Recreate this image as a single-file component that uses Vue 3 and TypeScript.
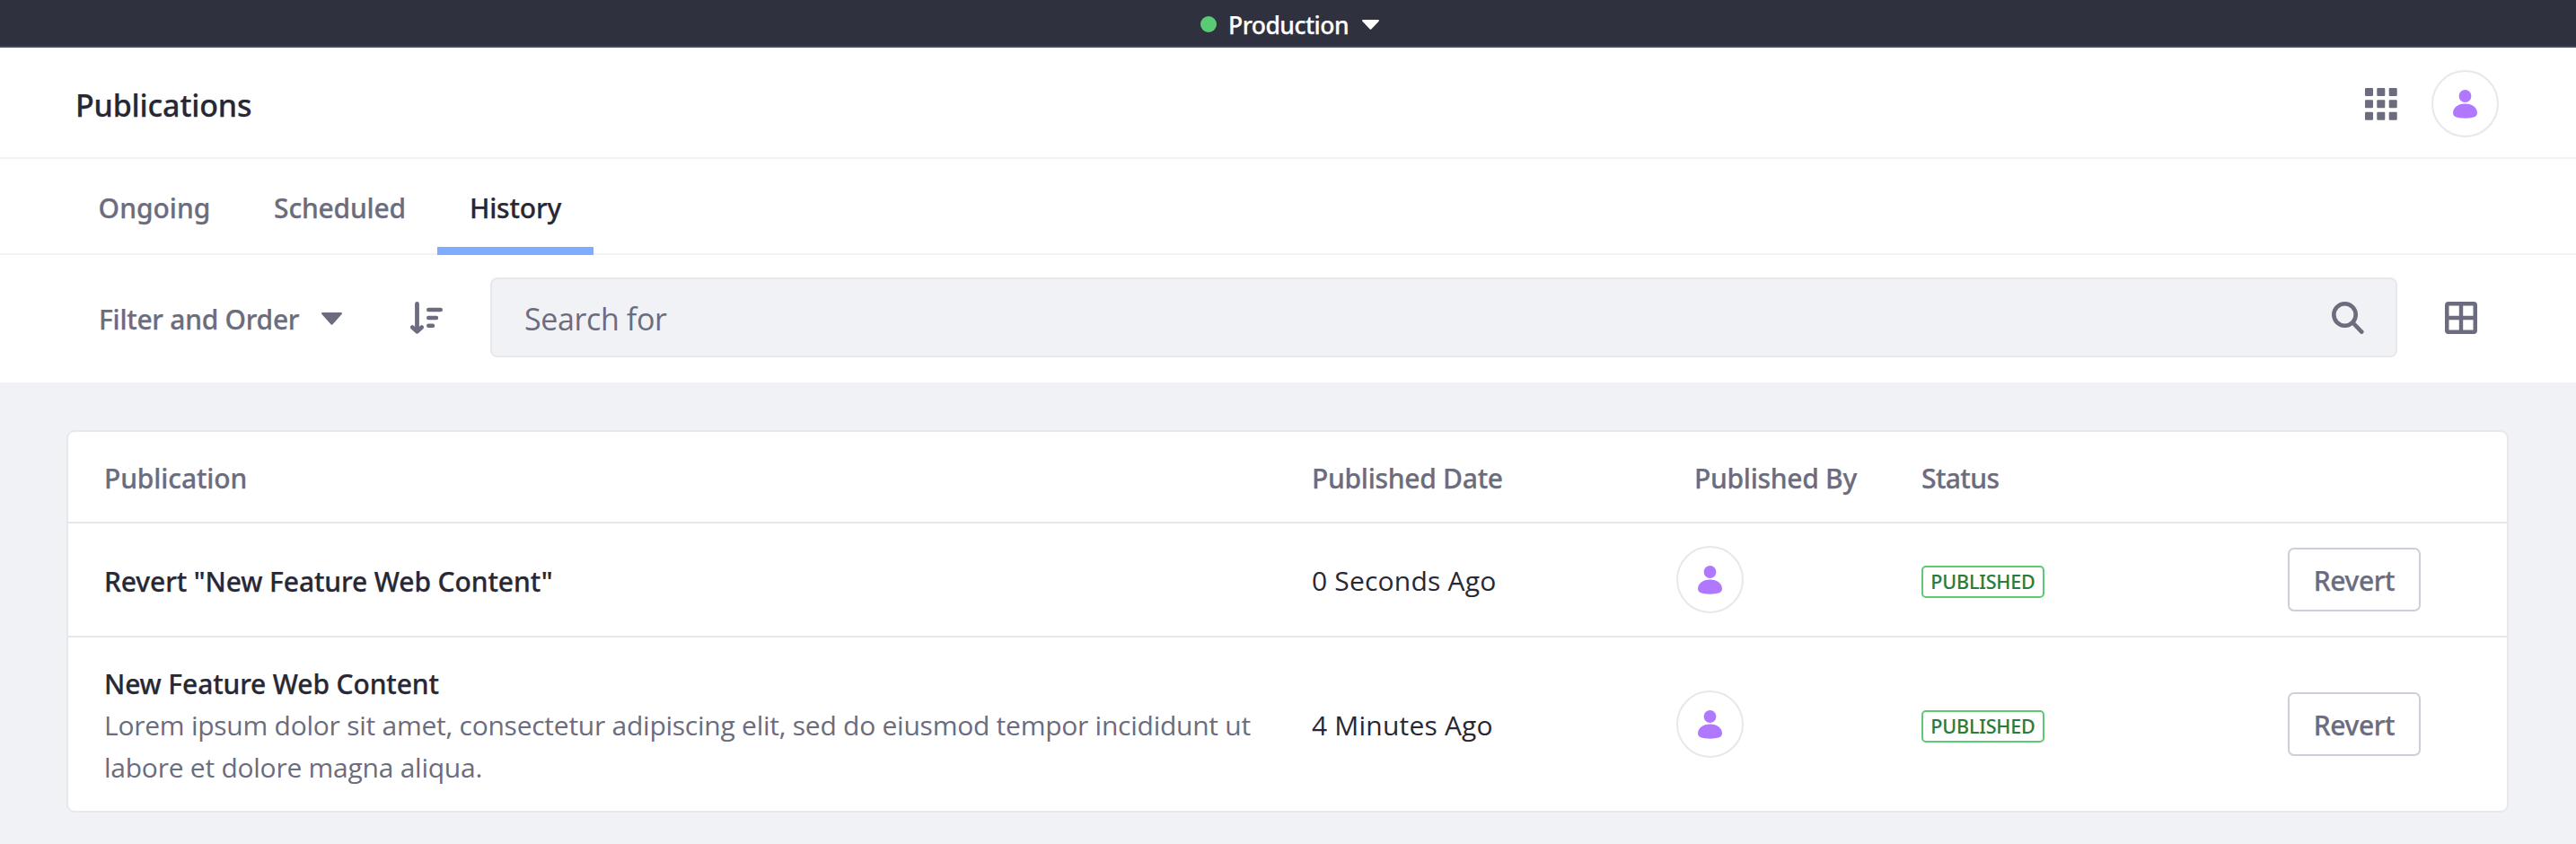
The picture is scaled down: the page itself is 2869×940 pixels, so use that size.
<script setup lang="ts">
interface Publication {
  id: number
  name: string
  nameClass: string
  lines: string[]
  date: string
  status: string
}

const tabs = [
  { key: 'ongoing', label: 'Ongoing', active: false },
  { key: 'scheduled', label: 'Scheduled', active: false },
  { key: 'history', label: 'History', active: true },
]

const publications: Publication[] = [
  {
    id: 1,
    name: 'Revert "New Feature Web Content"',
    nameClass: 'wide',
    lines: [],
    date: '0 Seconds Ago',
    status: 'Published',
  },
  {
    id: 2,
    name: 'New Feature Web Content',
    nameClass: '',
    lines: [
      'Lorem ipsum dolor sit amet, consectetur adipiscing elit, sed do eiusmod tempor incididunt ut',
      'labore et dolore magna aliqua.',
    ],
    date: '4 Minutes Ago',
    status: 'Published',
  },
]

const cells = [0, 13.3, 26.7]
</script>

<template>
  <div class="page">
    <div class="topbar">
      <span class="dot"></span>
      <span class="env">Production</span>
      <svg class="env-caret" width="19" height="11" viewBox="0 0 19 11">
        <path d="M1.2 0h16.6c1 0 1.5 1 .8 1.700L10.500 10.300a1.400 1.400 0 0 1-2 0L.4 1.700C-.3 1 .2 0 1.200 0z" fill="#fff" />
      </svg>
    </div>

    <header class="header">
      <h1>Publications</h1>
      <svg class="apps" width="36" height="36" viewBox="0 0 36 36">
        <template v-for="y in cells" :key="y">
          <rect v-for="x in cells" :key="x" :x="x" :y="y" width="9" height="9" rx="1" fill="#6b6c7e" />
        </template>
      </svg>
      <span class="avatar">
        <svg width="27" height="32" viewBox="0 0 27 32">
          <circle cx="13.500" cy="7" r="6.900" fill="#af78ff" />
          <path d="M13.500 15.600C21.500 15.600 27 20.200 27 25.800c0 4-4 5.900-13.500 5.900S0 29.800 0 25.800C0 20.200 5.500 15.600 13.500 15.600z" fill="#af78ff" />
        </svg>
      </span>
    </header>

    <nav class="tabs">
      <a v-for="t in tabs" :key="t.key" :class="['tab', t.key, { active: t.active }]">{{ t.label }}</a>
    </nav>

    <div class="toolbar">
      <div class="filter">
        <span>Filter and Order</span>
        <svg width="23" height="14" viewBox="0 0 23 14">
          <path d="M1.500 0h20c1.300 0 1.900 1.200 1 2.100L12.800 13a1.700 1.700 0 0 1-2.500 0L.5 2.100C-.4 1.200.2 0 1.500 0z" fill="#6b6c7e" />
        </svg>
      </div>
      <svg class="sort" width="36" height="36" viewBox="0 0 36 36" fill="none" stroke="#6b6c7e" stroke-linecap="round">
        <path d="M7.500 2.400V31" stroke-width="4.800" />
        <path d="M2.300 28.500l5.200 4.800 5.200-4.800" stroke-width="4.600" stroke-linejoin="round" />
        <path d="M20.200 9H33.800M20.200 18H29M20.200 26.800H25" stroke-width="4.400" />
      </svg>
      <div class="search">
        <span>Search for</span>
        <svg width="36" height="36" viewBox="0 0 36 36" fill="none" stroke="#6b6c7e">
          <circle cx="14.500" cy="14.500" r="12.200" stroke-width="4.600" />
          <path d="M24 24l9.300 9.600" stroke-width="4.600" stroke-linecap="round" />
        </svg>
      </div>
      <svg class="view" width="36" height="36" viewBox="0 0 36 36">
        <path fill-rule="evenodd" fill="#6b6c7e" d="M4 0h28a4 4 0 0 1 4 4v28a4 4 0 0 1-4 4H4a4 4 0 0 1-4-4V4a4 4 0 0 1 4-4zM4.500 4.500v11.300h11.300V4.500zM20.200 4.500v11.300h11.300V4.500zM4.500 20.200v11.300h11.300V20.200zM20.200 20.200v11.300h11.300V20.200z" />
      </svg>
    </div>

    <main class="content">
      <section class="card">
        <div class="row head">
          <span class="h-pub">Publication</span>
          <span class="h-date">Published Date</span>
          <span class="h-by">Published By</span>
          <span class="h-status">Status</span>
        </div>
        <div v-for="p in publications" :key="p.id" :class="['row', p.lines.length ? 'tall' : 'short']">
          <div class="pub">
            <div :class="['name', p.nameClass]">{{ p.name }}</div>
            <div v-for="line in p.lines" :key="line" class="desc">{{ line }}</div>
          </div>
          <span class="date">{{ p.date }}</span>
          <span class="avatar">
            <svg width="27" height="32" viewBox="0 0 27 32">
              <circle cx="13.500" cy="7" r="6.900" fill="#af78ff" />
              <path d="M13.500 15.600C21.500 15.600 27 20.200 27 25.800c0 4-4 5.900-13.500 5.900S0 29.800 0 25.800C0 20.200 5.500 15.600 13.500 15.600z" fill="#af78ff" />
            </svg>
          </span>
          <span class="badge">{{ p.status }}</span>
          <button class="revert" type="button">Revert</button>
        </div>
      </section>
    </main>
  </div>
</template>

<style>
body {
  margin: 0;
  background: #f1f2f5;
}
</style>

<style scoped>
.page {
  height: 940px;
  overflow: hidden;
  background: #f1f2f5;
  color: #272833;
  font: 500 30px/46.500px "Noto Sans", "Open Sans", sans-serif;
  -webkit-text-stroke-width: 0.250px;
}
.page *,
.page *::after {
  box-sizing: border-box;
}
svg {
  display: block;
  flex: none;
}
.topbar {
  display: flex;
  align-items: center;
  justify-content: center;
  height: 53px;
  padding: 3px 0 0 4px;
  background: #30313f;
  border-bottom: 2px solid #45455b;
  color: #fff;
}
.dot {
  width: 18px;
  height: 18px;
  border-radius: 50%;
  background: #5aca75;
}
.env {
  margin: 3px 15px 0 13px;
  font-size: 26.500px;
  letter-spacing: -0.520px;
}
.header {
  display: flex;
  align-items: center;
  height: 124px;
  padding: 3px 86px 0 84px;
  background: #fff;
  border-bottom: 2px solid #f1f2f5;
}
h1 {
  flex: 1;
  margin: 4px 0 0;
  font-size: 34px;
  font-weight: 500;
  letter-spacing: -0.180px;
}
.apps {
  margin-right: 38px;
}
.avatar {
  display: flex;
  align-items: center;
  justify-content: center;
  width: 75px;
  height: 75px;
  border: 2px solid #e7e7ed;
  border-radius: 50%;
  background: #fff;
}
.tabs {
  display: flex;
  height: 107px;
  padding-left: 74px;
  background: #fff;
  box-shadow: inset 0 -2px #f1f2f5;
}
.tab {
  position: relative;
  display: flex;
  align-items: center;
  justify-content: center;
  padding-top: 4px;
  color: #6b6c7e;
}
.ongoing {
  width: 195px;
  padding-left: 1px;
}
.scheduled {
  width: 218px;
  padding-left: 1px;
  letter-spacing: -0.200px;
}
.history {
  width: 174px;
  letter-spacing: -0.200px;
}
.active {
  color: #272833;
}
.active::after {
  content: "";
  position: absolute;
  left: 0;
  right: 0;
  bottom: 0;
  height: 9px;
  background: #80acff;
}
.toolbar {
  display: flex;
  align-items: center;
  height: 142px;
  padding: 0 0 3px 110px;
  background: #fff;
}
.filter {
  display: flex;
  align-items: center;
  width: 347px;
  color: #6b6c7e;
}
.filter span {
  width: 248px;
  margin-top: 5px;
  letter-spacing: -0.280px;
}
.filter svg {
  margin-top: 2px;
}
.search {
  display: flex;
  align-items: center;
  justify-content: space-between;
  width: 2124px;
  height: 89px;
  margin: 0 53px;
  padding: 0 35px 0 36px;
  border: 2px solid #e7e7ed;
  border-radius: 8px;
  background: #f1f2f5;
  color: #6b6c7e;
  font: 400 34px/46px "Open Sans", sans-serif;
  letter-spacing: -0.380px;
  -webkit-text-stroke-width: 0;
}
.search span {
  margin-top: 3px;
}
.content {
  padding: 53px 75px 35px 74px;
}
.card {
  border: 2px solid #e7e7ed;
  border-radius: 9px;
  background: #fff;
}
.row {
  display: grid;
  grid-template-columns: 1345px 405px 274px 408px 1fr;
  align-items: center;
  padding-left: 40px;
  border-bottom: 2px solid #e7e7ed;
}
.row:last-child {
  border-bottom: 0;
}
.head {
  height: 102px;
  padding-top: 4px;
  color: #6b6c7e;
}
.short {
  height: 127px;
}
.tall {
  height: 193px;
}
.h-pub {
  letter-spacing: -0.120px;
}
.h-date {
  letter-spacing: -0.280px;
}
.h-by {
  padding-left: 21px;
  letter-spacing: -0.280px;
}
.h-status {
  letter-spacing: -0.600px;
}
.pub {
  padding-top: 4px;
  white-space: nowrap;
}
.name {
  letter-spacing: -0.140px;
}
.short .pub {
  padding-top: 5px;
}
.wide {
  letter-spacing: -0.110px;
}
.desc {
  color: #6b6c7e;
  font-family: "Open Sans", sans-serif;
  font-weight: 400;
  letter-spacing: -0.250px;
  -webkit-text-stroke-width: 0;
}
.date {
  padding-top: 3px;
  font-family: "Open Sans", sans-serif;
  font-weight: 400;
  letter-spacing: 0.200px;
  -webkit-text-stroke-width: 0;
}
.short .date,
.short .revert {
  padding-top: 4px;
}
.row .avatar {
  margin-left: 1px;
  padding-right: 1px;
}
.badge {
  justify-self: start;
  width: 137px;
  height: 36px;
  margin-top: 5px;
  border: 2px solid #5aca75;
  border-radius: 5px;
  color: #287d3c;
  font-size: 21.500px;
  line-height: 32px;
  letter-spacing: -0.150px;
  text-align: center;
  text-transform: uppercase;
  -webkit-text-stroke-width: 0.100px;
}
.revert {
  width: 148px;
  height: 71px;
  padding: 4px 0 0;
  border: 2px solid #cdced9;
  border-radius: 7px;
  background: #fff;
  color: #6b6c7e;
  font: inherit;
  letter-spacing: -0.400px;
  -webkit-text-stroke-width: inherit;
}
</style>
